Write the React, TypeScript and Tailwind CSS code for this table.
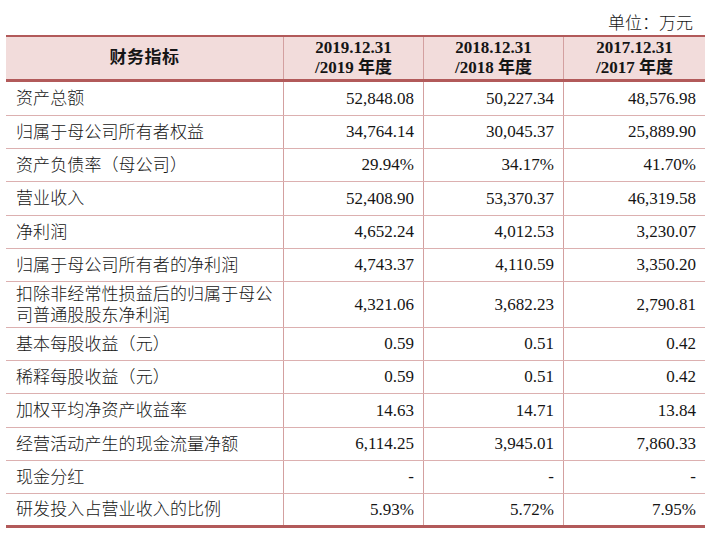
import React from 'react';

const rows: { label: string[]; values: string[]; h: string }[] = [
  { label: ['资产总额'], values: ['52,848.08', '50,227.34', '48,576.98'], h: 'h-[34px]' },
  { label: ['归属于母公司所有者权益'], values: ['34,764.14', '30,045.37', '25,889.90'], h: 'h-[33px]' },
  { label: ['资产负债率（母公司）'], values: ['29.94%', '34.17%', '41.70%'], h: 'h-[33px]' },
  { label: ['营业收入'], values: ['52,408.90', '53,370.37', '46,319.58'], h: 'h-[34px]' },
  { label: ['净利润'], values: ['4,652.24', '4,012.53', '3,230.07'], h: 'h-[33px]' },
  { label: ['归属于母公司所有者的净利润'], values: ['4,743.37', '4,110.59', '3,350.20'], h: 'h-[33px]' },
  {
    label: ['扣除非经常性损益后的归属于母公', '司普通股股东净利润'],
    values: ['4,321.06', '3,682.23', '2,790.81'],
    h: 'h-[46px]',
  },
  { label: ['基本每股收益（元）'], values: ['0.59', '0.51', '0.42'], h: 'h-[33px]' },
  { label: ['稀释每股收益（元）'], values: ['0.59', '0.51', '0.42'], h: 'h-[33px]' },
  { label: ['加权平均净资产收益率'], values: ['14.63', '14.71', '13.84'], h: 'h-[34px]' },
  { label: ['经营活动产生的现金流量净额'], values: ['6,114.25', '3,945.01', '7,860.33'], h: 'h-[33px]' },
  { label: ['现金分红'], values: ['-', '-', '-'], h: 'h-[33px]' },
  { label: ['研发投入占营业收入的比例'], values: ['5.93%', '5.72%', '7.95%'], h: 'h-[34px]' },
];

const years = [
  ['2019.12.31', '/2019 年度'],
  ['2018.12.31', '/2018 年度'],
  ['2017.12.31', '/2017 年度'],
];

export default function App() {
  return (
    <div
      className="w-[707px] h-[533px] bg-white text-[#151515] text-[17px] overflow-hidden"
      style={{ fontFamily: '"Liberation Serif", "Noto Sans CJK SC", serif' }}
    >
      <div className="h-[35px] flex items-end justify-end pr-[14px] leading-[20px] pb-[1px] font-light">
        单位：万元
      </div>

      <div className="ml-[6px] w-[699px]">
        {/* header */}
        <div className="grid grid-cols-[278px_140px_140px_141px] h-[47px] bg-[#f2dcdb] border-t-2 border-b-[3px] border-[#b25a5a] font-bold">
          <div className="flex items-center justify-center border-r border-[#d3a0a0] tracking-[0.5px]">
            财务指标
          </div>
          {years.map((y, i) => (
            <div
              key={y[0]}
              className={`flex flex-col items-center justify-center leading-[20px] ${
                i < 2 ? 'border-r border-[#d3a0a0]' : ''
              }`}
            >
              <span>{y[0]}</span>
              <span>{y[1]}</span>
            </div>
          ))}
        </div>

        {/* body */}
        {rows.map((r, idx) => (
          <div
            key={r.label.join('')}
            className={`grid grid-cols-[278px_140px_140px_141px] ${r.h} ${
              idx === rows.length - 1 ? 'border-b-[3px] border-[#b25a5a]' : 'border-b border-[#dcb0b0]'
            }`}
          >
            <div className="flex flex-col justify-center pl-[10px] border-r border-[#d3a0a0] leading-[21px] tracking-[0.1px] font-light">
              {r.label.map((l) => (
                <span key={l}>{l}</span>
              ))}
            </div>
            {r.values.map((v, i) => (
              <div
                key={i}
                className={`flex items-center justify-end pr-[9px] ${i < 2 ? 'border-r border-[#d3a0a0]' : ''}`}
              >
                {v}
              </div>
            ))}
          </div>
        ))}
      </div>
    </div>
  );
}
